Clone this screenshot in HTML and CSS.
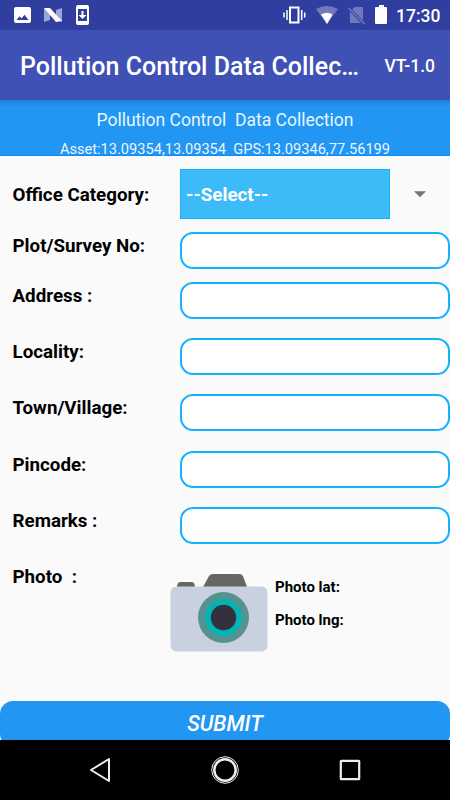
FILE: index.html
```html
<!DOCTYPE html>
<html lang="en">
<head>
<meta charset="utf-8">
<title>Pollution Control Data Collection</title>
<link rel="stylesheet" href="styles.css">
</head>
<body>
<div class="status">
  <svg width="284" height="30" viewBox="0 0 284 30">
    <path fill="#fff" fill-rule="evenodd" d="M16 7h13q2 0 2 2v12q0 2-2 2H16q-2 0-2-2V9q0-2 2-2zM16.500 20h12l-4-5.200-3 3.800-2-2.300z"/>
    <path fill="#9da4d8" d="M44 8l6 5v7l-6 2zM56 10l6-2v14l-6-5z"/>
    <path fill="#fff" d="M44 8h6l12 13-6 1z"/>
    <path fill="#fff" fill-rule="evenodd" d="M78 5h9q2 0 2 2v16q0 2-2 2h-9q-2 0-2-2V7q0-2 2-2zM78 9v12h9V9z"/>
    <path fill="#fff" d="M81.500 11h2v4h3l-4 4-4-4h3z"/>
  </svg>
  <svg width="106" height="30" viewBox="283 0 106 30">
    <path fill="none" stroke="#fff" stroke-width="2" d="M290 7.500h8.500v15H290z"/>
    <path stroke="#fff" stroke-width="1.500" d="M287 10v10M301.700 10v10M284 12.500v5M304.700 12.500v5"/>
    <path fill="#7079bd" d="M316 9q10.500-6 22 0L327 24z"/>
    <path fill="#fff" d="M321 14.500q6-3.500 11.500 0L327 24z"/>
    <path fill="#7079bd" d="M355 7h8v13.500L352 9.500zM350 11.500L361 23h-11z"/>
    <path stroke="#7079bd" stroke-width="1.500" d="M348.500 8l16 16"/>
    <path fill="#fff" d="M379 5h5v2h2q1 0 1 1v15q0 1-1 1h-10q-1 0-1-1V8q0-1 1-1h3z"/>
  </svg>
  <span class="clock">17:30</span>
</div>
<header class="appbar"><h1>Pollution Control Data Collec…</h1><span class="version">VT-1.0</span></header>
<div class="banner">
  <div class="banner-title">Pollution Control&nbsp; Data Collection</div>
  <div class="banner-gps">Asset:13.09354,13.09354&nbsp; GPS:13.09346,77.56199</div>
</div>
<main class="form">
  <div class="row row-select"><label>Office Category:</label><div class="select">--Select--</div><svg class="caret" width="12" height="7" viewBox="0 0 12 7"><path fill="#757575" d="M0 .3h12l-6 6z"/></svg></div>
  <div class="row row-plot"><label>Plot/Survey No:</label><input type="text"></div>
  <div class="row"><label>Address :</label><input type="text"></div>
  <div class="row"><label>Locality:</label><input type="text"></div>
  <div class="row"><label>Town/Village:</label><input type="text"></div>
  <div class="row"><label>Pincode:</label><input type="text"></div>
  <div class="row"><label>Remarks :</label><input type="text"></div>
  <div class="row row-photo"><label>Photo&nbsp; :</label>
    <svg class="camera" width="98" height="80" viewBox="0 0 98 80">
      <path fill="#666" d="M7 14q0-5 4-5h10q4 0 4 5zM33 14L39 3q1-2 4-2h26q3 0 4 2l4 11z"/>
      <rect x=".5" y="13.500" width="97" height="65" rx="6" fill="#c9d0df"/>
      <circle cx="53.500" cy="44.500" r="25.500" fill="#559390"/>
      <circle cx="53.500" cy="44.500" r="18.300" fill="#00b5b5"/>
      <circle cx="53.500" cy="44.500" r="12.700" fill="#35303e"/>
    </svg>
    <div class="coords"><span>Photo lat:</span><span>Photo lng:</span></div>
  </div>
</main>
<div class="submit-area"><button class="submit">SUBMIT</button></div>
<nav class="navbar">
  <svg width="450" height="60" viewBox="0 0 450 60" fill="none" stroke="#eee">
    <path stroke-width="2" stroke-linejoin="round" d="M91 30l18-11v22z"/>
    <circle cx="225" cy="30" r="13.300" stroke-width="1"/>
    <circle cx="225" cy="30" r="10.700" stroke-width="2.500"/>
    <rect x="340.800" y="20.800" width="18.400" height="18.400" rx=".5" stroke-width="2.200"/>
  </svg>
</nav>
</body>
</html>
```
FILE: styles.css
```css
* { box-sizing: border-box; }
body {
  margin: 0;
  width: 450px;
  height: 800px;
  display: flex;
  flex-direction: column;
  overflow: hidden;
  background: #fafafa;
  color: #000;
  font-family: Roboto, sans-serif;
}
svg { display: block; flex: none; }
.status { flex: none; height: 30px; display: flex; background: #303f9f; }
.clock { margin-left: 7px; color: #fff; font-size: 17.5px; font-weight: 500; line-height: 32px; }
.status svg:first-child { margin-right: -1px; }
.appbar {
  flex: none;
  height: 70px;
  padding: 0 15px 0 20px;
  display: flex;
  justify-content: space-between;
  align-items: center;
  background: #3f51b5;
  color: #fff;
}
h1 { margin: 3px 0 0; font-size: 25px; font-weight: 500; line-height: 30px; white-space: nowrap; }
.version { margin-top: 2px; font-size: 17.5px; font-weight: 500; }
.banner {
  flex: none;
  height: 56px;
  padding-top: 8px;
  background: linear-gradient(#1c83d5, #2196f3 7px);
  border-bottom: 1px solid #0a8cf4;
  color: #e9f5ff;
  text-align: center;
  white-space: nowrap;
}
.banner-title { font-size: 17.5px; line-height: 24px; }
.banner-gps { margin-top: 10px; font-size: 14.6px; line-height: 14px; }
.form { flex: none; height: 544px; }
.row { display: flex; align-items: flex-start; height: 56.2px; }
.row-select { height: 76px; padding-top: 13px; }
.row-plot { height: 50px; }
label {
  flex: none;
  width: 180px;
  padding: 2px 0 0 12.5px;
  font-size: 18.75px;
  font-weight: 700;
  line-height: 24px;
  white-space: nowrap;
}
.row-select label { padding-top: 14px; }
input {
  width: 270px;
  height: 37px;
  margin: 0;
  padding: 0 10px;
  border: 2px solid #14b2fc;
  border-radius: 13px;
  background: #fff;
}
.select {
  width: 210px;
  height: 50px;
  padding-left: 5px;
  border: 1px solid #12b3fb;
  background: #3dbbf9;
  color: #fff;
  font-size: 18.75px;
  font-weight: 700;
  line-height: 50px;
}
.caret { margin: 22px 0 0 24px; }
.row-photo { height: 137px; }
.row-photo label { width: 170px; }
.camera { margin-top: 10px; }
.coords { display: flex; flex-direction: column; gap: 13px; margin: 14px 0 0 7px; font-size: 15px; font-weight: 700; line-height: 20px; }
.submit-area { flex: none; height: 40px; overflow: hidden; }
.submit {
  display: block;
  width: 450px;
  height: 46px;
  margin-top: 1px;
  padding: 0;
  border: 0;
  border-radius: 13px;
  background: #2196f3;
  color: #fff;
  font: italic 500 21.4px/46px Roboto, sans-serif;
}
.navbar { flex: none; height: 60px; background: #000; }
```
